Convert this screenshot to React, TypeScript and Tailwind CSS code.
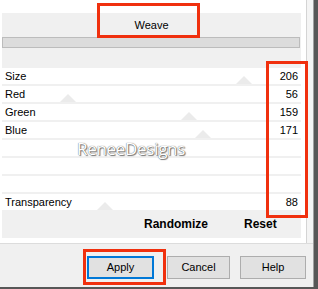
import React from "react";

const rows: { label: string; value: string; v: number | null }[] = [
  { label: "Size", value: "206", v: 206 },
  { label: "Red", value: "56", v: 56 },
  { label: "Green", value: "159", v: 159 },
  { label: "Blue", value: "171", v: 171 },
  { label: "", value: "", v: null },
  { label: "", value: "", v: null },
  { label: "", value: "", v: null },
  { label: "Transparency", value: "88", v: 88 },
];

function Thumb({ v }: { v: number }) {
  const x = v * 1.173;
  return (
    <svg
      className="absolute bottom-0"
      style={{ left: x - 8 }}
      width="16"
      height="8"
      viewBox="0 0 16 8"
    >
      <polygon points="8,0 16,8 0,8" fill="#ebebeb" />
    </svg>
  );
}

export default function App() {
  return (
    <div className="relative w-[318px] h-[289px] flex flex-col bg-white overflow-hidden text-[11px] text-black font-['Liberation_Sans',Arial,sans-serif]">
      <div className="flex flex-1 min-h-0">
        <div className="w-[313px] flex flex-col">
          <div className="h-[243px] flex bg-white">
            <div className="w-[301px] pl-[2px] flex flex-col">
              <div className="h-[13px]" />
              <div className="h-[55px] bg-[#f0f0f0] flex flex-col">
                <div className="h-[24px] flex items-center justify-center">Weave</div>
                <div className="h-[11px] mr-[1px] border border-[#bcbcbc] bg-[#dcdcdc]" />
              </div>
              {rows.map((r, i) => (
                <React.Fragment key={i}>
                  <div className="relative h-[16px] flex items-center justify-between pl-[3px] pr-[3px] pt-[1px]">
                    {r.v !== null && <Thumb v={r.v} />}
                    <span className="relative">{r.label}</span>
                    <span className="relative">{r.value}</span>
                  </div>
                  {i < rows.length - 1 && <div className="h-[2px] bg-[#f0f0f0]" />}
                </React.Fragment>
              ))}
              <div className="h-[28px] bg-[#f0f0f0] flex items-center font-bold text-[12px]">
                <span className="ml-[142px]">Randomize</span>
                <span className="ml-[36px]">Reset</span>
              </div>
              <div className="h-[5px]" />
            </div>
            <div className="w-[5px] bg-white" />
            <div className="w-[1px] bg-[#d4d4d4]" />
            <div className="flex-1 bg-[#f4f4f4]" />
          </div>
          <div className="flex-1 bg-[#f0f0f0] border-t border-[#dcdcdc] flex items-start pt-[12px]">
            <div className="ml-[87px] w-[67px] h-[23px] border-2 border-[#0078d7] bg-[#e1e1e1] flex items-center justify-center">
              Apply
            </div>
            <div className="ml-[13px] w-[63px] h-[23px] border border-[#adadad] bg-[#e1e1e1] flex items-center justify-center">
              Cancel
            </div>
            <div className="ml-[10px] w-[66px] h-[23px] border border-[#adadad] bg-[#e1e1e1] flex items-center justify-center">
              Help
            </div>
          </div>
        </div>
        <div className="w-[1px] bg-[#a0a0a0]" />
        <div className="w-[4px] bg-[#575757]" />
      </div>
      <div className="h-[2px] bg-[#575757]" />

      <div className="absolute left-[77px] top-[140px] text-[17px] text-white font-['Open_Sans',sans-serif] [text-shadow:0_0_1px_#444,1px_1px_1px_#777] leading-none tracking-[-0.3px]">
        ReneeDesigns
      </div>

      <div className="absolute left-[97px] top-[3px] w-[103px] h-[35px] border-[3px] border-[#f0300e]" />
      <div className="absolute left-[266px] top-[61px] w-[42px] h-[157px] border-[3px] border-[#f0300e]" />
      <div className="absolute left-[83px] top-[249px] w-[83px] h-[36px] border-[3px] border-[#f0300e]" />
    </div>
  );
}
